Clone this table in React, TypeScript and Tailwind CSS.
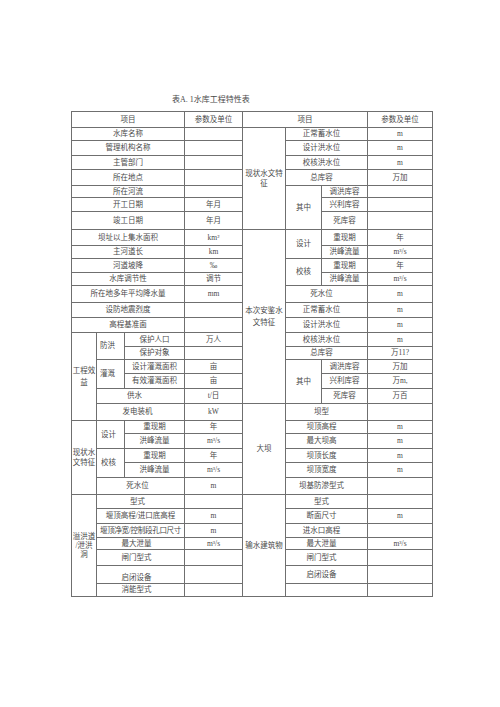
import type { ReactNode } from "react"
import { twMerge } from "tailwind-merge"

function Td({
  children,
  rs,
  cs,
  className,
}: {
  children?: ReactNode
  rs?: number
  cs?: number
  className?: string
}) {
  return (
    <td
      rowSpan={rs}
      colSpan={cs}
      className={twMerge(
        "border border-[#6f6f6f] p-0 text-center align-middle leading-none whitespace-nowrap",
        className
      )}
    >
      {children}
    </td>
  )
}

// items in the right-hand merged item column sit a little left of centre in the scan
const R = "pr-[10px]"

export default function App() {
  return (
    <div className="w-[500px] h-[707px] bg-white pt-[93px] text-[#4a4a4a] font-['Liberation_Serif','Noto_Sans_CJK_SC',serif]">
      <div className="pl-[172px] h-[14px] leading-[14px] text-[8px]">表A. 1水库工程特性表</div>

      <table className="mt-[4px] ml-[71px] w-[361px] table-fixed border-collapse border border-[#555] text-[7.5px]">
        <colgroup>
          <col className="w-[25px]" />
          <col className="w-[28px]" />
          <col className="w-[60px]" />
          <col className="w-[58px]" />
          <col className="w-[43px]" />
          <col className="w-[36px]" />
          <col className="w-[46px]" />
          <col className="w-[65px]" />
        </colgroup>
        <tbody>
          <tr className="h-[16px]">
            <Td cs={3}>项目</Td>
            <Td>参数及单位</Td>
            <Td cs={3}>项目</Td>
            <Td>参数及单位</Td>
          </tr>
          <tr className="h-[13px]">
            <Td cs={3}>水库名称</Td>
            <Td />
            <Td rs={7} className="leading-[10px]">
              现状水文特
              <br />征
            </Td>
            <Td cs={2} className={R}>正常蓄水位</Td>
            <Td>m</Td>
          </tr>
          <tr className="h-[15px]">
            <Td cs={3}>管理机构名称</Td>
            <Td />
            <Td cs={2} className={R}>设计洪水位</Td>
            <Td>m</Td>
          </tr>
          <tr className="h-[14px]">
            <Td cs={3}>主管部门</Td>
            <Td />
            <Td cs={2} className={R}>校核洪水位</Td>
            <Td>m</Td>
          </tr>
          <tr className="h-[16px]">
            <Td cs={3}>所在地点</Td>
            <Td />
            <Td cs={2} className={R}>总库容</Td>
            <Td>万加</Td>
          </tr>
          <tr className="h-[12px]">
            <Td cs={3}>所在河流</Td>
            <Td />
            <Td rs={3}>其中</Td>
            <Td>调洪库容</Td>
            <Td />
          </tr>
          <tr className="h-[14px]">
            <Td cs={3}>开工日期</Td>
            <Td>年月</Td>
            <Td>兴利库容</Td>
            <Td />
          </tr>
          <tr className="h-[18px]">
            <Td cs={3}>竣工日期</Td>
            <Td>年月</Td>
            <Td>死库容</Td>
            <Td />
          </tr>
          <tr className="h-[16px]">
            <Td cs={3}>坝址以上集水面积</Td>
            <Td>km²</Td>
            <Td rs={12} className="leading-[12px]">
              本次安鉴水
              <br />
              文特征
            </Td>
            <Td rs={2}>设计</Td>
            <Td>重现期</Td>
            <Td>年</Td>
          </tr>
          <tr className="h-[13px]">
            <Td cs={3}>主河道长</Td>
            <Td>km</Td>
            <Td>洪峰流量</Td>
            <Td>m³/s</Td>
          </tr>
          <tr className="h-[14px]">
            <Td cs={3}>河道坡降</Td>
            <Td>‰</Td>
            <Td rs={2}>校核</Td>
            <Td>重现期</Td>
            <Td>年</Td>
          </tr>
          <tr className="h-[13px]">
            <Td cs={3}>水库调节性</Td>
            <Td>调节</Td>
            <Td>洪峰流量</Td>
            <Td>m³/s</Td>
          </tr>
          <tr className="h-[17px]">
            <Td cs={3}>所在地多年平均降水量</Td>
            <Td>mm</Td>
            <Td cs={2} className={R}>死水位</Td>
            <Td>m</Td>
          </tr>
          <tr className="h-[15px]">
            <Td cs={3}>设防地震烈度</Td>
            <Td />
            <Td cs={2} className={R}>正常蓄水位</Td>
            <Td>m</Td>
          </tr>
          <tr className="h-[15px]">
            <Td cs={3}>高程基准面</Td>
            <Td />
            <Td cs={2} className={R}>设计洪水位</Td>
            <Td>m</Td>
          </tr>
          <tr className="h-[14px]">
            <Td rs={6} className="leading-[12px]">
              工程效
              <br />益
            </Td>
            <Td rs={2} className="pr-[6px]">防洪</Td>
            <Td>保护人口</Td>
            <Td>万人</Td>
            <Td cs={2} className={R}>校核洪水位</Td>
            <Td>m</Td>
          </tr>
          <tr className="h-[13px]">
            <Td>保护对象</Td>
            <Td />
            <Td cs={2} className={R}>总库容</Td>
            <Td>万11?</Td>
          </tr>
          <tr className="h-[14px]">
            <Td rs={2} className="pr-[6px]">灌溉</Td>
            <Td>设计灌溉面积</Td>
            <Td>亩</Td>
            <Td rs={3}>其中</Td>
            <Td>调洪库容</Td>
            <Td>万加</Td>
          </tr>
          <tr className="h-[15px]">
            <Td>有效灌溉面积</Td>
            <Td>亩</Td>
            <Td>兴利库容</Td>
            <Td>万m,</Td>
          </tr>
          <tr className="h-[15px]">
            <Td cs={2} className="pr-[12px]">供水</Td>
            <Td>t/日</Td>
            <Td>死库容</Td>
            <Td>万百</Td>
          </tr>
          <tr className="h-[17px]">
            <Td cs={2} className="pr-[6px]">发电装机</Td>
            <Td>kW</Td>
            <Td rs={6}>大坝</Td>
            <Td cs={2} className={R}>坝型</Td>
            <Td />
          </tr>
          <tr className="h-[13px]">
            <Td rs={5} className="leading-[10px]">
              现状水
              <br />
              文特征
            </Td>
            <Td rs={2} className="pr-[4px]">设计</Td>
            <Td>重现期</Td>
            <Td>年</Td>
            <Td cs={2} className={R}>坝顶高程</Td>
            <Td>m</Td>
          </tr>
          <tr className="h-[15px]">
            <Td>洪峰流量</Td>
            <Td>m³/s</Td>
            <Td cs={2} className={R}>最大坝高</Td>
            <Td>m</Td>
          </tr>
          <tr className="h-[14px]">
            <Td rs={2} className="pr-[4px]">校核</Td>
            <Td>重现期</Td>
            <Td>年</Td>
            <Td cs={2} className={R}>坝顶长度</Td>
            <Td>m</Td>
          </tr>
          <tr className="h-[15px]">
            <Td>洪峰流量</Td>
            <Td>m³/s</Td>
            <Td cs={2} className={R}>坝顶宽度</Td>
            <Td>m</Td>
          </tr>
          <tr className="h-[17px]">
            <Td cs={2} className="pr-[6px]">死水位</Td>
            <Td>m</Td>
            <Td cs={2} className={R}>坝基防渗型式</Td>
            <Td />
          </tr>
          <tr className="h-[14px]">
            <Td rs={7} className="leading-[9px]">
              溢洪道
              <br />
              /泄洪
              <br />洞
            </Td>
            <Td cs={2} className="pr-[6px]">型式</Td>
            <Td />
            <Td rs={7}>输水建筑物</Td>
            <Td cs={2} className={R}>型式</Td>
            <Td />
          </tr>
          <tr className="h-[15px]">
            <Td cs={2}>堰顶高程/进口底高程</Td>
            <Td>m</Td>
            <Td cs={2} className={R}>断面尺寸</Td>
            <Td>m</Td>
          </tr>
          <tr className="h-[14px]">
            <Td cs={2} className="tracking-[-0.3px]">堰顶净宽/控制段孔口尺寸</Td>
            <Td>m</Td>
            <Td cs={2} className={R}>进水口高程</Td>
            <Td />
          </tr>
          <tr className="h-[12px]">
            <Td cs={2} className="pr-[8px]">最大泄量</Td>
            <Td>m³/s</Td>
            <Td cs={2} className={R}>最大泄量</Td>
            <Td>m³/s</Td>
          </tr>
          <tr className="h-[16px]">
            <Td cs={2} className="pr-[8px]">闸门型式</Td>
            <Td />
            <Td cs={2} className={R}>闸门型式</Td>
            <Td />
          </tr>
          <tr className="h-[18px]">
            <Td cs={2} className="pr-[8px] pt-[6px]">启闭设备</Td>
            <Td />
            <Td cs={2} className={R}>启闭设备</Td>
            <Td />
          </tr>
          <tr className="h-[13px]">
            <Td cs={2} className="pr-[8px]">消能型式</Td>
            <Td />
            <Td cs={2} />
            <Td />
          </tr>
        </tbody>
      </table>
    </div>
  )
}
